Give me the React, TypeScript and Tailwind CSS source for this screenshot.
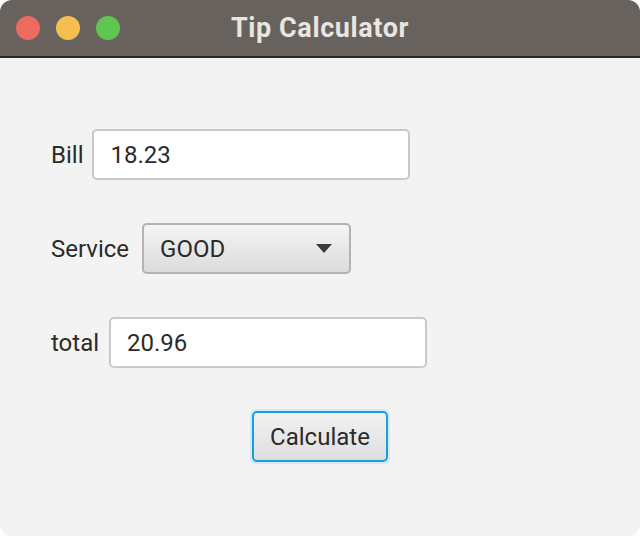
export default function App() {
  return (
    <div className="h-[536px] w-[640px] bg-white font-['Roboto',sans-serif]">
      <div className="flex h-full flex-col overflow-hidden rounded-[12px] bg-[#f3f3f3]">
        {/* title bar */}
        <div className="relative flex h-[58px] shrink-0 items-center justify-center border-b-2 border-[#2a2826] bg-[#67625e]">
          <div className="absolute left-[16px] top-[16px] flex gap-[16px]">
            <span className="h-[24px] w-[24px] rounded-full bg-[#ec6a5e]" />
            <span className="h-[24px] w-[24px] rounded-full bg-[#f4bf4f]" />
            <span className="h-[24px] w-[24px] rounded-full bg-[#61c554]" />
          </div>
          <span className="text-[27px] font-bold tracking-[0.6px] text-[#e9e5e1]">Tip Calculator</span>
        </div>

        {/* form */}
        <div className="flex flex-col gap-[43px] pl-[51px] pt-[71px] text-[24px] text-[#2b2b2b]">
          <div className="flex h-[51px] items-center gap-[9px]">
            <span>Bill</span>
            <div className="flex h-[51px] w-[318px] items-center rounded-[5px] border-2 border-[#c9c9c9] bg-white pl-[16px]">
              18.23
            </div>
          </div>

          <div className="flex h-[51px] items-center gap-[13px]">
            <span>Service</span>
            <div className="flex h-[51px] w-[209px] items-center justify-between rounded-[5px] border-2 border-[#b3b3b3] bg-gradient-to-b from-[#f4f4f4] to-[#dcdcdc] pl-[16px] pr-[17px]">
              <span>GOOD</span>
              <svg width="16" height="9" viewBox="0 0 16 9">
                <path d="M0 0h16L8 9z" fill="#3a3a3a" />
              </svg>
            </div>
          </div>

          <div className="flex h-[51px] items-center gap-[10px]">
            <span>total</span>
            <div className="flex h-[51px] w-[318px] items-center rounded-[5px] border-2 border-[#c9c9c9] bg-white pl-[16px]">
              20.96
            </div>
          </div>

          <div className="flex h-[51px] pl-[201px]">
            <div className="flex h-[51px] w-[136px] items-center justify-center rounded-[5px] border-2 border-[#1b9fdb] bg-gradient-to-b from-[#f2f2f2] to-[#dedede] shadow-[0_0_0_2px_#cfe9f6]">
              Calculate
            </div>
          </div>
        </div>
      </div>
    </div>
  );
}
